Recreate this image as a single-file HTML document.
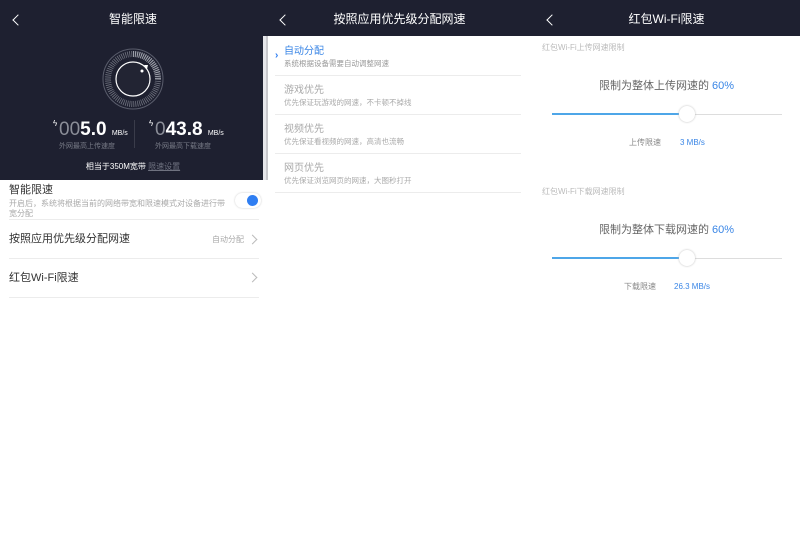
<!DOCTYPE html>
<html><head><meta charset="utf-8"><style>
*{margin:0;padding:0;box-sizing:border-box}
body{width:800px;height:547px;background:#fff;font-family:"Liberation Sans","Noto Sans CJK SC",sans-serif;position:relative;overflow:hidden}
.a{position:absolute;white-space:nowrap;line-height:1.2}
.dark{background:#1e2030}
.t{color:#fff;font-size:12px}
.line{position:absolute;height:1px;background:#ececec}
.g{color:#333;font-size:11px}
.chev{position:absolute;width:7px;height:7px;border-right:1.2px solid #bbb;border-top:1.2px solid #bbb;transform:rotate(45deg)}
.back{position:absolute;width:8px;height:8px;border-left:1.5px solid #fff;border-bottom:1.5px solid #fff;transform:rotate(45deg)}
</style></head><body>
<!-- panel 1 -->
<div class="a dark" style="left:0;top:0;width:266px;height:180px"></div>
<div class="a" style="left:263px;top:36px;width:4px;height:144px;background:#e6e6ea"></div>
<div class="back" style="left:14px;top:16px"></div>
<div class="a t" style="left:0;width:266px;text-align:center;top:12px">智能限速</div>
<svg class="a" style="left:100px;top:46px" width="66" height="66" viewBox="0 0 66 66">
<circle cx="33" cy="33" r="30" fill="none" stroke="#5a5d6c" stroke-width="1"/>
<circle cx="33" cy="33" r="25" fill="none" stroke="#70737f" stroke-width="6" stroke-dasharray="0.8 1.2"/>
<path d="M33 8 A25 25 0 0 1 58 33" fill="none" stroke="#a8abb5" stroke-width="6" stroke-dasharray="0.8 1.2"/>
<circle cx="33" cy="33" r="17" fill="#222433" stroke="#fff" stroke-width="1.2"/>
<circle cx="42" cy="25" r="1.5" fill="#fff"/>
<path d="M44 19 l4 0 l-1 4z" fill="#fff"/>
</svg>
<div class="a" style="left:53px;top:119px;color:#fff;font-size:8px">ϟ</div>
<div class="a" style="left:59px;top:119px;font-size:19px;color:#8b8e98">00<span style="color:#fff;font-weight:bold">5.0</span> <span style="font-size:7px;color:#fff">MB/s</span></div>
<div class="a" style="left:59px;top:143px;font-size:7px;color:#777a86">外网最高上传速度</div>
<div class="a" style="left:134px;top:120px;width:1px;height:28px;background:#3a3c4a"></div>
<div class="a" style="left:149px;top:119px;color:#fff;font-size:8px">ϟ</div>
<div class="a" style="left:155px;top:119px;font-size:19px;color:#8b8e98">0<span style="color:#fff;font-weight:bold">43.8</span> <span style="font-size:7px;color:#fff">MB/s</span></div>
<div class="a" style="left:155px;top:143px;font-size:7px;color:#777a86">外网最高下载速度</div>
<div class="a" style="left:0;width:266px;text-align:center;top:162px;font-size:8px;color:#fff">相当于350M宽带 <span style="color:#6f7280;text-decoration:underline">限速设置</span></div>
<div class="a g" style="left:9px;top:184px">智能限速</div>
<div class="a" style="left:9px;top:199px;font-size:8px;color:#aaa;line-height:10px;white-space:normal;width:218px">开启后，系统将根据当前的网络带宽和限速模式对设备进行带宽分配</div>
<div class="a" style="left:235px;top:193px;width:26px;height:15px;border-radius:8px;background:#fff;box-shadow:0 0 2px #ccc"></div>
<div class="a" style="left:247px;top:195px;width:11px;height:11px;border-radius:6px;background:#2f7ef2"></div>
<div class="line" style="left:9px;top:219px;width:250px"></div>
<div class="a g" style="left:9px;top:233px">按照应用优先级分配网速</div>
<div class="a" style="left:212px;top:235px;font-size:8px;color:#aaa">自动分配</div>
<div class="chev" style="left:249px;top:236px"></div>
<div class="line" style="left:9px;top:258px;width:250px"></div>
<div class="a g" style="left:9px;top:272px">红包Wi-Fi限速</div>
<div class="chev" style="left:249px;top:274px"></div>
<div class="line" style="left:9px;top:297px;width:250px"></div>
<!-- panel 2 -->
<div class="a dark" style="left:266px;top:0;width:267px;height:36px"></div>
<div class="a" style="left:266px;top:36px;width:2px;height:144px;background:#c8c8cc"></div>
<div class="back" style="left:281px;top:16px"></div>
<div class="a t" style="left:266px;width:267px;text-align:center;top:12px">按照应用优先级分配网速</div>
<div class="a" style="left:275px;top:50px;color:#2f7ef2;font-size:10px;font-weight:bold">›</div>
<div class="a" style="left:284px;top:46px;font-size:10px;color:#3a86e6">自动分配</div>
<div class="a" style="left:284px;top:59px;font-size:7.5px;color:#999">系统根据设备需要自动调整网速</div>
<div class="line" style="left:275px;top:75px;width:246px"></div>
<div class="a" style="left:284px;top:85px;font-size:10px;color:#aaa">游戏优先</div>
<div class="a" style="left:284px;top:98px;font-size:7.5px;color:#aaa">优先保证玩游戏的网速，不卡顿不掉线</div>
<div class="line" style="left:275px;top:114px;width:246px"></div>
<div class="a" style="left:284px;top:124px;font-size:10px;color:#aaa">视频优先</div>
<div class="a" style="left:284px;top:137px;font-size:7.5px;color:#aaa">优先保证看视频的网速，高清也流畅</div>
<div class="line" style="left:275px;top:153px;width:246px"></div>
<div class="a" style="left:284px;top:163px;font-size:10px;color:#aaa">网页优先</div>
<div class="a" style="left:284px;top:176px;font-size:7.5px;color:#aaa">优先保证浏览网页的网速，大图秒打开</div>
<div class="line" style="left:275px;top:192px;width:246px"></div>
<!-- panel 3 -->
<div class="a dark" style="left:533px;top:0;width:267px;height:36px"></div>
<div class="back" style="left:548px;top:16px"></div>
<div class="a t" style="left:533px;width:267px;text-align:center;top:12px">红包Wi-Fi限速</div>
<div class="a" style="left:542px;top:43px;font-size:8px;color:#bbb">红包Wi-Fi上传网速限制</div>
<div class="a" style="left:533px;width:267px;text-align:center;top:80px;font-size:11px;color:#666">限制为整体上传网速的 <span style="color:#3a86e6">60%</span></div>
<div class="a" style="left:552px;top:114px;width:230px;height:1px;background:#ddd"></div>
<div class="a" style="left:552px;top:113px;width:135px;height:2px;background:#4ea6e8"></div>
<div class="a" style="left:679px;top:106px;width:16px;height:16px;border-radius:8px;background:#fff;box-shadow:0 0 2px #bbb"></div>
<div class="a" style="left:629px;top:138px;font-size:8px;color:#888">上传限速</div>
<div class="a" style="left:680px;top:138px;font-size:8px;color:#3a86e6">3 MB/s</div>
<div class="a" style="left:542px;top:187px;font-size:8px;color:#bbb">红包Wi-Fi下载网速限制</div>
<div class="a" style="left:533px;width:267px;text-align:center;top:224px;font-size:11px;color:#666">限制为整体下载网速的 <span style="color:#3a86e6">60%</span></div>
<div class="a" style="left:552px;top:258px;width:230px;height:1px;background:#ddd"></div>
<div class="a" style="left:552px;top:257px;width:135px;height:2px;background:#4ea6e8"></div>
<div class="a" style="left:679px;top:250px;width:16px;height:16px;border-radius:8px;background:#fff;box-shadow:0 0 2px #bbb"></div>
<div class="a" style="left:624px;top:282px;font-size:8px;color:#888">下载限速</div>
<div class="a" style="left:674px;top:282px;font-size:8px;color:#3a86e6">26.3 MB/s</div>
</body></html>
